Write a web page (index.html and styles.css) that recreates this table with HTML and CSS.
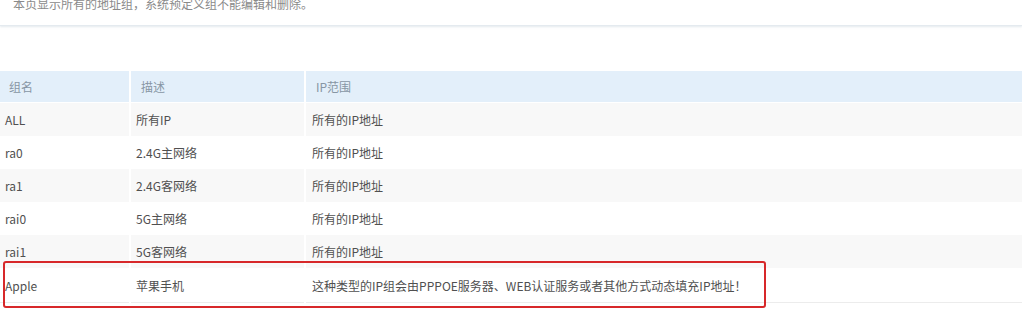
FILE: index.html
```html
<!DOCTYPE html>
<html lang="zh-CN">
<head>
<meta charset="utf-8">
<title>地址组</title>
<link rel="stylesheet" href="styles.css">
</head>
<body>
<div class="notice">
  <p class="notice-text">本页显示所有的地址组，系统预定义组不能编辑和删除。</p>
</div>
<div class="table-wrap">
  <table class="grid">
    <colgroup>
      <col class="c1">
      <col class="c2">
      <col class="c3">
    </colgroup>
    <thead>
      <tr><th>组名</th><th>描述</th><th>IP范围</th></tr>
    </thead>
    <tbody>
      <tr class="odd"><td>ALL</td><td>所有IP</td><td>所有的IP地址</td></tr>
      <tr><td>ra0</td><td>2.4G主网络</td><td>所有的IP地址</td></tr>
      <tr class="odd"><td>ra1</td><td>2.4G客网络</td><td>所有的IP地址</td></tr>
      <tr><td>rai0</td><td>5G主网络</td><td>所有的IP地址</td></tr>
      <tr class="odd"><td>rai1</td><td>5G客网络</td><td>所有的IP地址</td></tr>
      <tr class="last"><td>Apple</td><td>苹果手机</td><td>这种类型的IP组会由PPPOE服务器、WEB认证服务或者其他方式动态填充IP地址！</td></tr>
    </tbody>
  </table>
  <div class="highlight"></div>
</div>
</body>
</html>
```
FILE: styles.css
```css
html, body {
  margin: 0;
  padding: 0;
  background: #ffffff;
}
body {
  font-family: "Noto Sans CJK SC", "Noto Sans", sans-serif;
  font-size: 12px;
  color: #555555;
  min-height: 327px;
}
.notice {
  display: flow-root;
  height: 25px;
  border-bottom: 1px solid #e4eaef;
  box-shadow: 0 1px 2px rgba(200, 212, 222, 0.5);
}
.notice-text {
  margin: -4px 0 0 13px;
  line-height: 16px;
  color: #8a8a8a;
  font-size: 12px;
}
.table-wrap {
  position: relative;
  margin-top: 45px;
  margin-left: -2px;
  padding-bottom: 20px;
}
.grid {
  width: 1026px;
  border-collapse: separate;
  border-spacing: 2px 0;
  table-layout: fixed;
}
.c1 { width: 129px; }
.c2 { width: 173px; }
.c3 { width: auto; }
.grid th {
  padding: 0 0 0 10px;
  background: #e3effa;
  color: #8796a4;
  font-weight: normal;
  text-align: left;
  border-bottom: 1px solid #ffffff;
  box-sizing: border-box;
  height: 32px;
}
.grid th:first-child { padding-left: 9px; }
.grid td {
  height: 33px;
  padding: 0 0 0 5px;
  white-space: nowrap;
  color: #505050;
}
.grid td:last-child { padding-left: 6px; }
.grid tr.odd td { background: #f8f8f8; }
.grid tr.last td { border-bottom: 1px solid #ececec; height: 34px; }
.highlight {
  position: absolute;
  left: 5px;
  top: 190px;
  width: 759px;
  height: 43px;
  border: 2px solid #d7282a;
  border-radius: 3px;
}
```
